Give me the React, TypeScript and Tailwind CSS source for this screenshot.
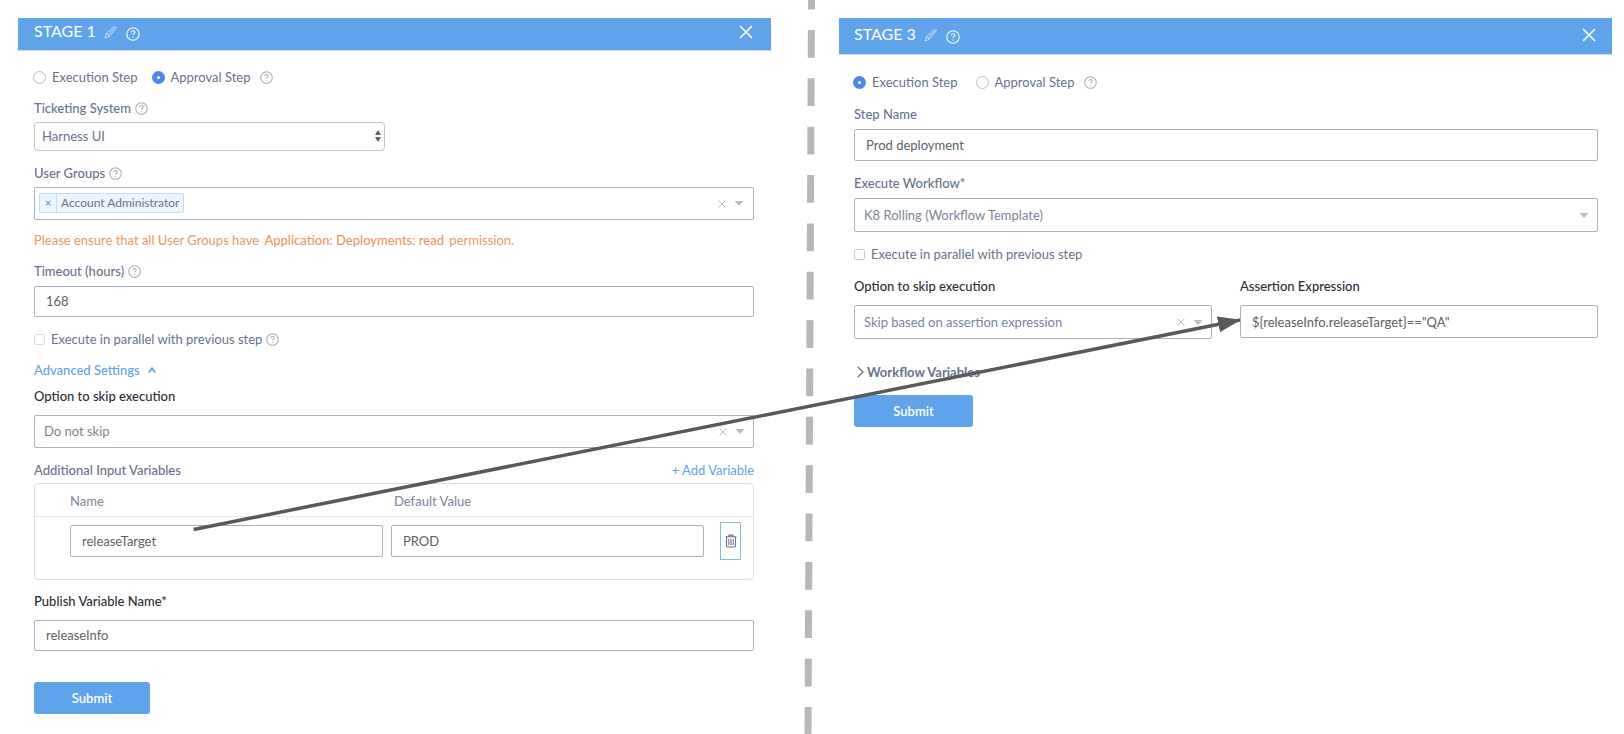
import { useLayoutEffect, useRef, useState } from "react";
import type { ReactNode, RefObject } from "react";

const labelTone = "text-[#67728a]";
const field =
  "block w-full min-w-0 rounded-[2px] border border-[#a9b1bf] bg-white text-[#5c5f66] outline-none";

function HelpIcon({ className = "size-[13px] text-[#a9a9a9]" }: { className?: string }) {
  return (
    <svg viewBox="0 0 14 14" className={`shrink-0 ${className}`} fill="none" stroke="currentColor" aria-hidden="true">
      <circle cx="7" cy="7" r="6.2" strokeWidth="1.1" />
      <path d="M5.2 5.5c.1-1 .8-1.7 1.9-1.7 1 0 1.8.6 1.8 1.5 0 1.2-1.8 1.3-1.8 2.7" strokeWidth="1.1" />
      <circle cx="7.1" cy="10" r=".4" fill="currentColor" strokeWidth=".5" />
    </svg>
  );
}

function PencilIcon() {
  return (
    <svg viewBox="0 0 14 14" className="size-[14px]" fill="none" stroke="currentColor" strokeWidth=".8" strokeLinejoin="round" aria-hidden="true">
      <path d="M10.200 1.200L2.400 8.600 1 13l4.400-1.800 7.600-9.400M2.400 8.600l3 2.600M4 9.900l7.700-8.400" />
    </svg>
  );
}

function CloseIcon() {
  return (
    <svg viewBox="0 0 14 14" className="size-[14px]" stroke="currentColor" strokeWidth="1.6" aria-hidden="true">
      <path d="M1 1l12 12M13 1L1 13" />
    </svg>
  );
}

function TrashIcon() {
  return (
    <svg viewBox="0 0 12 14" className="h-[14px] w-[12px] shrink-0" fill="none" stroke="currentColor" aria-hidden="true">
      <path d="M.5 2.800h11M4 2.500V1.100h4v1.400M1.500 2.800v9c0 .8.400 1.200 1.200 1.200h6.600c.8 0 1.200-.4 1.200-1.200v-9" strokeWidth="1.100" />
      <path d="M3.600 4.700v6.300M5.200 4.700v6.300M6.800 4.700v6.300M8.400 4.700v6.300" strokeWidth=".8" />
    </svg>
  );
}

function Indicators({ clearable }: { clearable: boolean }) {
  return (
    <span className="pointer-events-none absolute inset-y-0 right-[9px] flex items-center gap-2 text-[#b7bdc9]">
      {clearable && (
        <svg viewBox="0 0 8 8" className="size-2" stroke="currentColor" aria-hidden="true">
          <path d="M.5 .5l7 7M7.500 .5l-7 7" />
        </svg>
      )}
      <svg viewBox="0 0 10 5" className="h-[5px] w-[10px]" fill="currentColor" aria-hidden="true">
        <path d="M.5 0h9L5 5z" />
      </svg>
    </span>
  );
}

function Picker({ id, value, clearable = false, height }: { id: string; value: string; clearable?: boolean; height: string }) {
  return (
    <div className="relative">
      <select id={id} className={`${field} ${height} appearance-none pr-10 pb-px pl-[9px] text-[#7a8396]`}>
        <option>{value}</option>
      </select>
      <Indicators clearable={clearable} />
    </div>
  );
}

function Header({ title, className }: { title: string; className: string }) {
  return (
    <header className={`flex items-center justify-between border-b border-[#cfdcec] bg-[#5fa3ea] text-white ${className}`}>
      <div className="flex items-center gap-2">
        <h2 className="pb-px text-[16px] leading-5">{title}</h2>
        <button type="button" aria-label="Rename stage" className="text-white/80">
          <PencilIcon />
        </button>
        <button type="button" aria-label="Stage help" className="pt-1">
          <HelpIcon className="size-[14px] text-white" />
        </button>
      </div>
      <button type="button" aria-label="Close">
        <CloseIcon />
      </button>
    </header>
  );
}

function StepKind({ name, selected, children }: { name: string; selected: boolean; children: ReactNode }) {
  return (
    <label className="flex items-center gap-[6px]">
      <input
        type="radio"
        name={name}
        defaultChecked={selected}
        className="size-[13px] appearance-none rounded-full border border-[#bdbdbd] bg-white checked:border-[5px] checked:border-[#4f86ec]"
      />
      {children}
    </label>
  );
}

function StepKinds({ name, selected, gap }: { name: string; selected: "execution" | "approval"; gap: string }) {
  return (
    <div className={`-ml-px flex items-center ${labelTone}`}>
      <div className={`flex ${gap}`}>
        <StepKind name={name} selected={selected === "execution"}>Execution Step</StepKind>
        <StepKind name={name} selected={selected === "approval"}>Approval Step</StepKind>
      </div>
      <span className="pl-[10px]">
        <HelpIcon />
      </span>
    </div>
  );
}

function Label({ htmlFor, help = false, strong = false, className = "", children }: {
  htmlFor: string;
  help?: boolean;
  strong?: boolean;
  className?: string;
  children: ReactNode;
}) {
  return (
    <label htmlFor={htmlFor} className={`flex items-center gap-1 font-medium ${strong ? "text-[#2b2e35]" : "text-[#67728a]"} ${className}`}>
      {children}
      {help && <HelpIcon />}
    </label>
  );
}

function Parallel({ help = false, className, tone }: { help?: boolean; className: string; tone: string }) {
  return (
    <label className={`flex items-center ${labelTone} ${className}`}>
      <input type="checkbox" className={`mr-[6px] size-[11px] appearance-none rounded-[2px] border bg-white ${tone}`} />
      Execute in parallel with previous step
      {help && (
        <span className="pl-1">
          <HelpIcon />
        </span>
      )}
    </label>
  );
}

function Submit({ className }: { className: string }) {
  return (
    <button type="submit" className={`h-8 rounded-[3px] bg-[#5fa3ea] font-semibold text-white ${className}`}>
      Submit
    </button>
  );
}

function VariablesTable({ nameRef }: { nameRef: RefObject<HTMLInputElement | null> }) {
  return (
    <div className="mt-[3px] rounded-[4px] border border-[#dcdfe4]">
      <table className="w-full table-fixed">
        <colgroup>
          <col className="w-[31px]" />
          <col />
          <col />
          <col className="w-[45px]" />
        </colgroup>
        <thead>
          <tr className="h-8 border-b border-[#e4e6ea] text-left text-[#828da1]">
            <td />
            <th scope="col" className="px-1 pt-[3px] font-medium">Name</th>
            <th scope="col" className="px-[7px] pt-[3px] font-medium">Default Value</th>
            <td />
          </tr>
        </thead>
        <tbody>
          <tr>
            <td />
            <td className="px-1 pt-[5px]">
              <input ref={nameRef} aria-label="Name" defaultValue="releaseTarget" className={`${field} h-8 px-[11px]`} />
            </td>
            <td className="px-1 pt-[5px]">
              <input aria-label="Default Value" defaultValue="PROD" className={`${field} h-8 px-[11px]`} />
            </td>
            <td className="pt-[5px] pl-3">
              <button type="button" aria-label="Delete variable" className="flex h-[38px] w-[21px] items-center justify-center border border-[#8db8e4] text-[#67728a]">
                <TrashIcon />
              </button>
            </td>
          </tr>
        </tbody>
      </table>
      <div className="h-[19px]" />
    </div>
  );
}

function ApprovalStage({ nameRef }: { nameRef: RefObject<HTMLInputElement | null> }) {
  return (
    <section>
      <Header title="STAGE 1" className="h-[33px] pr-[18px] pb-[5px] pl-4" />
      <form className="flex flex-col pt-4 pr-[17px] pl-4" onSubmit={(e) => e.preventDefault()}>
        <StepKinds name="stage1-kind" selected="approval" gap="gap-[14px]" />

        <Label htmlFor="ticketing" help className="mt-[11px]">Ticketing System</Label>
        <div className="relative mt-1 w-full max-w-[351px]">
          <select id="ticketing" className="h-[29px] w-full appearance-none rounded-[4px] border border-[#c4c4c4] bg-white px-[7px] pb-px text-[#67728a]">
            <option>Harness UI</option>
          </select>
          <svg viewBox="0 0 6 12" className="pointer-events-none absolute top-2 right-1 h-3 w-[6px] text-[#56617a]" fill="currentColor" aria-hidden="true">
            <path d="M3 0l3 5H0zM3 12l3-5H0z" />
          </svg>
        </div>

        <Label htmlFor="groups" help className="mt-3">User Groups</Label>
        <div className={`${field} relative mt-1 flex h-[33px] items-center px-1 pb-[2px]`}>
          <span className="flex h-5 items-stretch rounded-[2px] border border-[#c2dbf7] bg-[#ecf4fd] text-[12px] leading-[18px] text-[#6b7488]">
            <button type="button" aria-label="Remove Account Administrator" className="w-[17px] border-r border-[#c2dbf7] text-[#4a90e2]">×</button>
            <span className="px-1">Account Administrator</span>
          </span>
          <input id="groups" className="h-5 min-w-0 flex-1 outline-none" />
          <Indicators clearable />
        </div>

        <p className="mt-[10px] text-[#e8985f]">
          Please ensure that all User Groups have <span className="px-[2px] font-medium">Application: Deployments: read</span> permission.
        </p>

        <Label htmlFor="timeout" help className="mt-[11px]">Timeout (hours)</Label>
        <input id="timeout" defaultValue="168" className={`${field} mt-[5px] h-[31px] px-[11px] pb-px`} />

        <Parallel help className="mt-3" tone="border-[#dfdfdf]" />

        <button type="button" className="mt-[11px] flex items-center gap-2 self-start font-medium text-[#5fa3ea]">
          Advanced Settings
          <svg viewBox="0 0 8 6" className="h-[6px] w-2" fill="none" stroke="currentColor" strokeWidth="1.800" aria-hidden="true">
            <path d="M.8 5.500L4 1.200l3.200 4.300" />
          </svg>
        </button>

        <Label htmlFor="skip1" strong className="mt-[6px] mb-[9px]">Option to skip execution</Label>
        <Picker id="skip1" value="Do not skip" clearable height="h-[33px]" />

        <div className="mt-3 flex items-center justify-between">
          <h3 className={`font-medium ${labelTone}`}>Additional Input Variables</h3>
          <button type="button" className="text-[#5fa3ea]">+ Add Variable</button>
        </div>
        <VariablesTable nameRef={nameRef} />

        <Label htmlFor="publish" strong className="mt-[11px]">Publish Variable Name*</Label>
        <input id="publish" defaultValue="releaseInfo" className={`${field} mt-[9px] h-[31px] px-[11px]`} />

        <Submit className="mt-[31px] w-[116px]" />
      </form>
    </section>
  );
}

function ExecutionStage({ assertionRef }: { assertionRef: RefObject<HTMLInputElement | null> }) {
  return (
    <section>
      <Header title="STAGE 3" className="h-[37px] pr-4 pb-[3px] pl-[15px]" />
      <form className="flex flex-col pt-[17px] pr-[14px] pl-[15px]" onSubmit={(e) => e.preventDefault()}>
        <StepKinds name="stage3-kind" selected="execution" gap="gap-[18px]" />

        <Label htmlFor="step" className="mt-3">Step Name</Label>
        <input id="step" defaultValue="Prod deployment" className={`${field} mt-[5px] h-8 px-[11px] pb-px`} />

        <Label htmlFor="workflow" className="mt-3 mb-[5px]">Execute Workflow*</Label>
        <Picker id="workflow" value="K8 Rolling (Workflow Template)" height="h-[34px]" />

        <Parallel className="mt-3" tone="border-[#c6c6c6]" />

        <div className="mt-3 grid grid-cols-2 gap-7">
          <div>
            <Label htmlFor="skip3" strong className="mb-[9px]">Option to skip execution</Label>
            <Picker id="skip3" value="Skip based on assertion expression" clearable height="h-[34px]" />
          </div>
          <div>
            <Label htmlFor="assertion" strong className="mb-[9px]">Assertion Expression</Label>
            <input id="assertion" ref={assertionRef} defaultValue={'${releaseInfo.releaseTarget}=="QA"'} className={`${field} h-[33px] px-[11px]`} />
          </div>
        </div>

        <button type="button" className={`mt-[23px] flex items-center gap-[3px] self-start pl-[3px] font-bold ${labelTone}`}>
          <svg viewBox="0 0 7 12" className="h-3 w-[7px]" fill="none" stroke="currentColor" strokeWidth="1.300" aria-hidden="true">
            <path d="M.7 .7L6 6 .7 11.300" />
          </svg>
          Workflow Variables
        </button>

        <Submit className="mt-[13px] w-[119px]" />
      </form>
    </section>
  );
}

type Segment = { x1: number; y1: number; x2: number; y2: number };

export default function App() {
  const pageRef = useRef<HTMLElement>(null);
  const nameRef = useRef<HTMLInputElement>(null);
  const assertionRef = useRef<HTMLInputElement>(null);
  const [arrow, setArrow] = useState<Segment | null>(null);

  // The arrow joins the variable's name to the expression that reads it.
  useLayoutEffect(() => {
    const measure = () => {
      const page = pageRef.current?.getBoundingClientRect();
      const from = nameRef.current?.getBoundingClientRect();
      const to = assertionRef.current?.getBoundingClientRect();
      if (!page || !from || !to) return;
      setArrow({
        x1: from.left - page.left + from.width * 0.395,
        y1: from.top - page.top + 5,
        x2: to.left - page.left,
        y2: to.top - page.top + 15,
      });
    };
    measure();
    window.addEventListener("resize", measure);
    return () => window.removeEventListener("resize", measure);
  }, []);

  return (
    <main
      ref={pageRef}
      className="relative grid min-h-screen grid-cols-[753fr_68px_773fr] bg-white pr-3 pl-[18px] font-['Lato','Open_Sans',sans-serif] text-[13px] leading-5"
    >
      <div className="pt-[18px] pb-5">
        <ApprovalStage nameRef={nameRef} />
      </div>
      <svg className="h-full w-full" aria-hidden="true">
        <line x1="40.600" y1="-18.400" x2="37" y2="100%" stroke="#b7b7b7" strokeWidth="7" strokeDasharray="27.800 20.560" />
      </svg>
      <div className="pt-[18px] pb-5">
        <ExecutionStage assertionRef={assertionRef} />
      </div>
      {arrow && (
        <svg className="pointer-events-none absolute inset-0 h-full w-full" aria-hidden="true">
          <defs>
            <marker id="head" markerUnits="userSpaceOnUse" markerWidth="24" markerHeight="17" refX="22" refY="8" orient="auto">
              <path d="M0 0l23 8-23 8z" fill="#595959" />
            </marker>
          </defs>
          <line {...arrow} stroke="#595959" strokeWidth="3.500" markerEnd="url(#head)" />
        </svg>
      )}
    </main>
  );
}
